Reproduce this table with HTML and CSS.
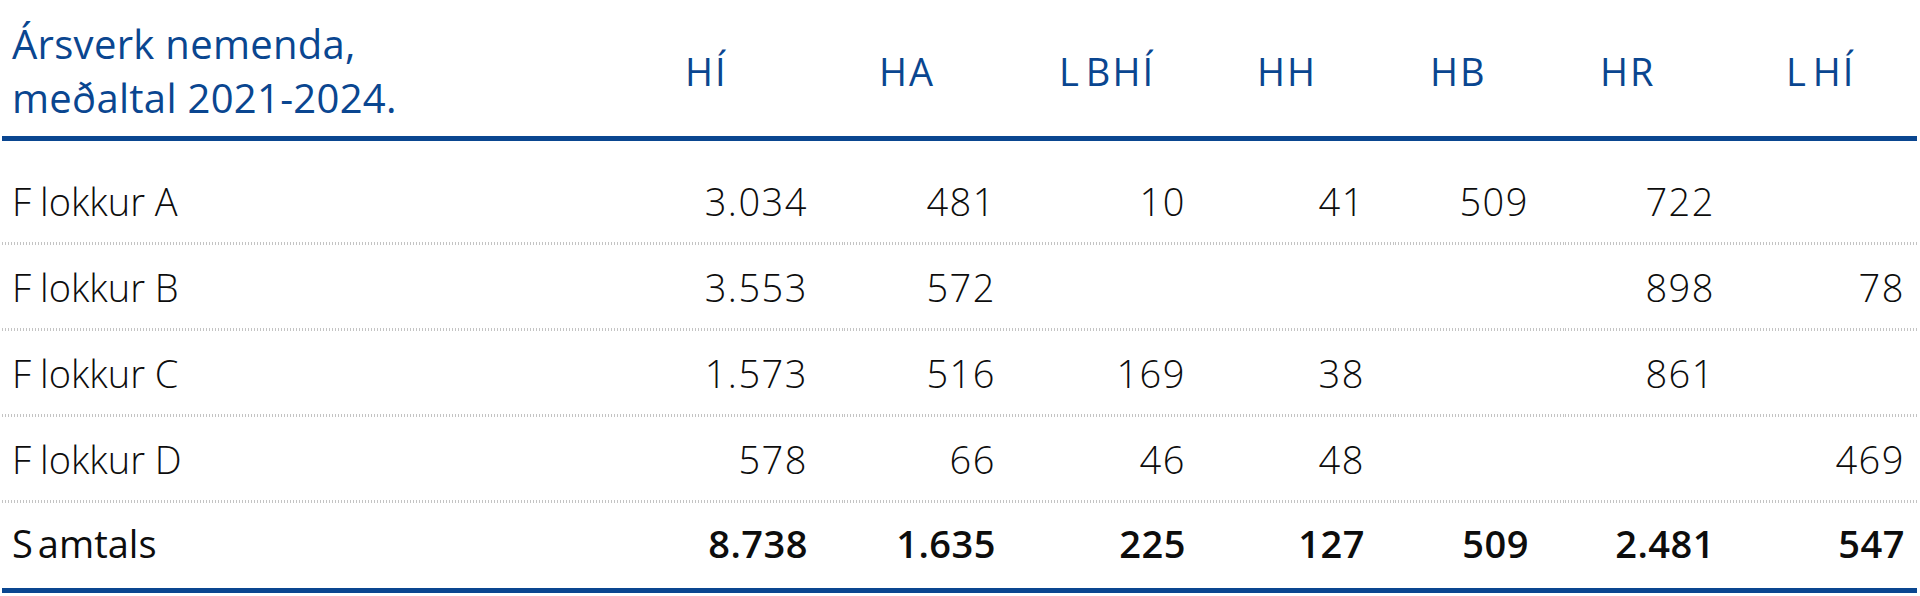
FILE: index.html
```html
<!DOCTYPE html>
<html lang="is">
<head>
<meta charset="utf-8">
<title>Ársverk nemenda</title>
<link rel="stylesheet" href="styles.css">
</head>
<body>
<table class="stats">
  <colgroup>
    <col class="col-label">
    <col class="col-hi">
    <col class="col-ha">
    <col class="col-lbhi">
    <col class="col-hh">
    <col class="col-hb">
    <col class="col-hr">
    <col class="col-lhi">
  </colgroup>
  <thead>
    <tr>
      <th class="title">Ársverk nemenda,<br>meðaltal 2021-2024.</th>
      <th class="school">HÍ</th>
      <th class="school">HA</th>
      <th class="school"><span class="kern">L</span>BHÍ</th>
      <th class="school">HH</th>
      <th class="school">HB</th>
      <th class="school">HR</th>
      <th class="school"><span class="kern">L</span>HÍ</th>
    </tr>
  </thead>
  <tbody>
    <tr>
      <td class="label"><span class="kern-f">F</span>lokkur A</td>
      <td class="num">3.034</td><td class="num">481</td><td class="num">10</td><td class="num">41</td><td class="num">509</td><td class="num">722</td><td class="num"></td>
    </tr>
    <tr>
      <td class="label"><span class="kern-f">F</span>lokkur B</td>
      <td class="num">3.553</td><td class="num">572</td><td class="num"></td><td class="num"></td><td class="num"></td><td class="num">898</td><td class="num">78</td>
    </tr>
    <tr>
      <td class="label"><span class="kern-f">F</span>lokkur C</td>
      <td class="num">1.573</td><td class="num">516</td><td class="num">169</td><td class="num">38</td><td class="num"></td><td class="num">861</td><td class="num"></td>
    </tr>
    <tr>
      <td class="label"><span class="kern-f">F</span>lokkur D</td>
      <td class="num">578</td><td class="num">66</td><td class="num">46</td><td class="num">48</td><td class="num"></td><td class="num"></td><td class="num">469</td>
    </tr>
  </tbody>
  <tfoot>
    <tr>
      <td class="label"><span class="kern">S</span>amtals</td>
      <td class="num">8.738</td><td class="num">1.635</td><td class="num">225</td><td class="num">127</td><td class="num">509</td><td class="num">2.481</td><td class="num">547</td>
    </tr>
  </tfoot>
</table>
</body>
</html>
```
FILE: styles.css
```css
html, body {
  margin: 0;
  padding: 0;
  background: #ffffff;
}

body {
  font-family: "Open Sans", "Noto Sans", "DejaVu Sans", sans-serif;
  color: #0d0d0d;
  font-size: 38px;
}

.stats {
  margin-left: 2px;
  width: 1915px;
  border-collapse: collapse;
  table-layout: fixed;
}

.col-label { width: 648px; }
.col-hi { width: 194px; }
.col-ha { width: 180px; }
.col-lbhi { width: 198px; }
.col-hh { width: 173px; }
.col-hb { width: 170px; }
.col-hr { width: 186px; }
.col-lhi { width: 166px; }

.stats th,
.stats td {
  padding: 0;
  line-height: 54px;
  white-space: nowrap;
}

.kern {
  margin-right: 5px;
}

.kern-f {
  margin-right: 9px;
}

/* header */
.stats thead th {
  color: #0a4690;
  font-weight: 400;
  text-align: left;
  vertical-align: middle;
  padding-top: 17px;
  padding-bottom: 11px;
  border-bottom: 5px solid #0a4690;
}

.stats thead th.title {
  padding-left: 10px;
  font-size: 40px;
  letter-spacing: 0.3px;
}

.stats thead th.school {
  padding-left: 35px;
  letter-spacing: 2px;
}

/* body rows */
.stats tbody td {
  padding-top: 15px;
  padding-bottom: 17px;
  font-weight: 300;
  background-image: repeating-linear-gradient(to right, #c4c4c4 0 1px, transparent 1px 3px);
  background-size: 100% 3px;
  background-position: left bottom;
  background-repeat: no-repeat;
}

.stats tbody tr:first-child td {
  padding-top: 33px;
}

.stats td.label {
  padding-left: 10px;
  text-align: left;
}

.stats td.num {
  text-align: right;
  padding-right: 36px;
  letter-spacing: 1.5px;
}

.stats td.num:nth-child(3) {
  padding-right: 28px;
}

.stats td.num:nth-child(5) {
  padding-right: 30px;
}

.stats td.num:last-child {
  padding-right: 12px;
}

/* totals */
.stats tfoot td {
  padding-top: 13px;
  padding-bottom: 18px;
  border-bottom: 5px solid #0a4690;
}

.stats tfoot td.label {
  font-weight: 400;
}

.stats tfoot td.num {
  font-weight: 600;
  letter-spacing: 0.5px;
}
```
